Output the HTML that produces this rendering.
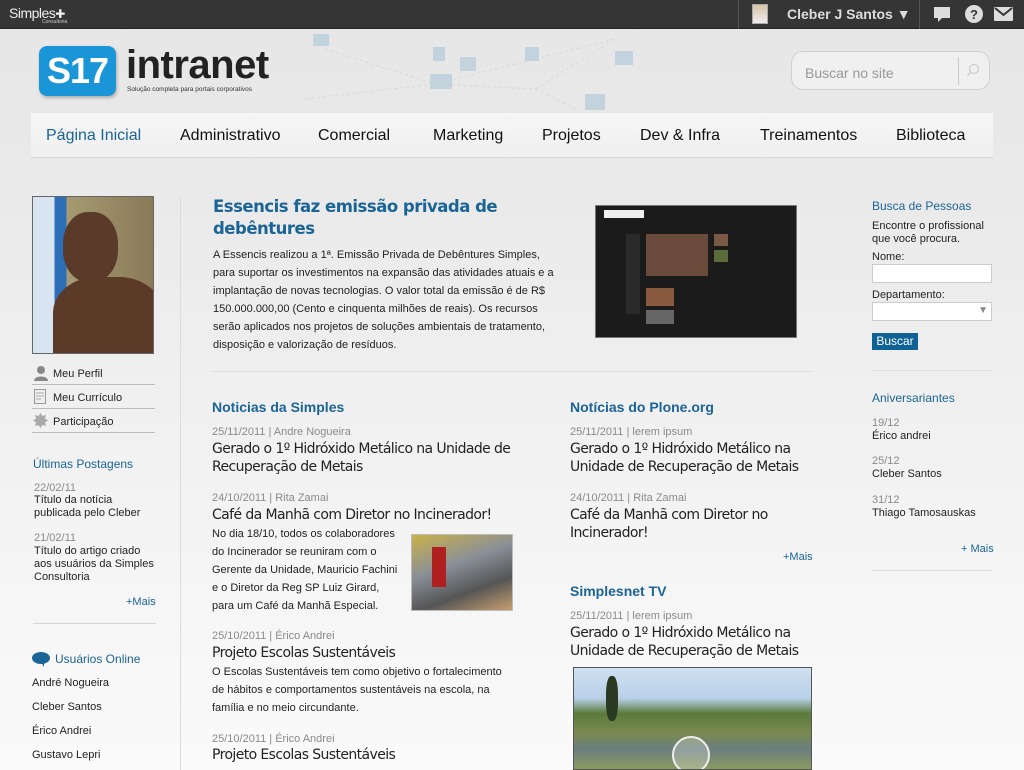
<!DOCTYPE html>
<html><head><meta charset="utf-8">
<style>
*{margin:0;padding:0;box-sizing:border-box}
body{width:1024px;height:770px;overflow:hidden;position:relative;font-family:"Liberation Sans",Arial,sans-serif;background:linear-gradient(#e6e6e6 0,#e9e9e9 160px,#ededed 300px,#f6f6f6 600px,#fafafa 770px)}
.a{position:absolute;white-space:nowrap}
.top{left:0;top:0;width:1024px;height:29px;background:#353535;border-bottom:1px solid #222}
.nav{left:31px;top:113px;width:962px;height:45px;background:linear-gradient(#f6f6f6,#efefef);border-bottom:1px solid #d6d6d6}
.ni{font-size:16px;color:#111;top:126px;line-height:20px}
.blue{color:#1b6496}
.meta{font-size:11px;color:#8a8a8a;line-height:14px}
.hl{font-size:14px;color:#222;line-height:18px;font-family:"DejaVu Sans",sans-serif;letter-spacing:-0.6px}
.tx{font-size:11px;color:#222;line-height:18px}
.sm{font-size:11px;color:#222;line-height:13px}
.sec{font-size:14px;font-weight:bold;color:#1b6496;line-height:18px}
.hr{height:1px;background:#d4d4d4}
</style></head><body>
<div class="a top"></div>
<div class="a" style="left:9px;top:5px;color:#eee;font-size:14px;letter-spacing:-0.5px">Simples<span style="font-size:12px">✚</span></div>
<div class="a" style="left:42px;top:19px;color:#ccc;font-size:5px">Consultoria</div>
<div class="a" style="left:738px;top:0;width:1px;height:29px;background:#555"></div>
<div class="a" style="left:752px;top:4px;width:16px;height:20px;background:linear-gradient(#d9c2a8,#eee);border:1px solid #aaa"></div>
<div class="a" style="left:787px;top:6px;color:#ddd;font-size:14px;font-weight:bold">Cleber J Santos ▼</div>
<div class="a" style="left:919px;top:0;width:1px;height:29px;background:#555"></div>
<svg class="a" style="left:933px;top:6px" width="18" height="17" viewBox="0 0 18 17"><path d="M1 1h16v11H9l-4 4v-4H1z" fill="#ddd"/></svg>
<svg class="a" style="left:965px;top:5px" width="18" height="18" viewBox="0 0 18 18"><circle cx="9" cy="9" r="9" fill="#ddd"/><text x="9" y="14" font-size="13" font-weight="bold" text-anchor="middle" fill="#353535" font-family="Liberation Sans">?</text></svg>
<svg class="a" style="left:994px;top:7px" width="19" height="14" viewBox="0 0 19 14"><rect width="19" height="14" rx="1" fill="#ddd"/><path d="M1 1l8.5 7L18 1" stroke="#353535" stroke-width="2" fill="none"/></svg>

<svg class="a" style="left:295px;top:29px" width="420" height="84" viewBox="0 0 420 84"><g stroke="#d8d8d8" stroke-width="1" fill="none" stroke-dasharray="3 3"><path d="M30 20L140 55L240 60L320 10"/><path d="M10 70L140 55L200 40"/><path d="M240 60L280 80"/><path d="M200 40L320 10"/></g><g fill="#c3d3dd"><rect x="18" y="5" width="16" height="12"/><rect x="135" y="45" width="22" height="15"/><rect x="138" y="18" width="12" height="14"/><rect x="165" y="28" width="16" height="14"/><rect x="230" y="18" width="14" height="14"/><rect x="320" y="22" width="18" height="14"/><rect x="290" y="65" width="20" height="16"/></g></svg>
<div class="a" style="left:39px;top:46px;width:77px;height:50px;background:#1a96d8;border-radius:8px;color:#fff;font-weight:bold;font-size:36px;line-height:50px;text-align:center;letter-spacing:-1px;box-shadow:1px 2px 3px rgba(0,0,0,.25)">S17</div>
<div class="a" style="left:126px;top:42px;font-size:40px;font-weight:bold;color:#222;line-height:46px;letter-spacing:-0.5px">intranet</div>
<div class="a" style="left:127px;top:86px;font-size:6.5px;color:#333">Solução completa para portais corporativos</div>
<div class="a" style="left:791px;top:51px;width:199px;height:39px;border:1px solid #d0d0d0;border-radius:12px;background:#f0f0f0"></div>
<div class="a" style="left:805px;top:65px;font-size:14px;color:#999">Buscar no site</div>
<div class="a" style="left:958px;top:57px;width:1px;height:28px;background:#ccc"></div>
<svg class="a" style="left:966px;top:63px" width="14" height="14" viewBox="0 0 14 14"><circle cx="8" cy="6" r="4.5" stroke="#ccc" stroke-width="1.3" fill="none"/><path d="M5 9L1.5 12.5" stroke="#ccc" stroke-width="1.5"/></svg>

<div class="a nav"></div>
<div class="a ni blue" style="left:46px">Página Inicial</div>
<div class="a ni" style="left:180px">Administrativo</div>
<div class="a ni" style="left:318px">Comercial</div>
<div class="a ni" style="left:433px">Marketing</div>
<div class="a ni" style="left:542px">Projetos</div>
<div class="a ni" style="left:640px">Dev &amp; Infra</div>
<div class="a ni" style="left:760px">Treinamentos</div>
<div class="a ni" style="left:896px">Biblioteca</div>

<div class="a" style="left:32px;top:196px;width:122px;height:158px;border:1px solid #666;background:linear-gradient(90deg,#d8e4ef 0,#d8e4ef 18%,#2c6fb8 18%,#2c6fb8 28%,#a59a72 28%,#8a7a58 100%);overflow:hidden"><div style="position:absolute;left:30px;top:15px;width:55px;height:70px;border-radius:45%;background:#5a3a28"></div><div style="position:absolute;left:20px;top:80px;width:110px;height:90px;border-radius:40% 40% 0 0;background:#5b3a27"></div></div>
<svg class="a" style="left:34px;top:365px" width="14" height="16" viewBox="0 0 14 16"><circle cx="7" cy="5" r="4" fill="#888"/><path d="M0 16c0-6 14-6 14 0z" fill="#888"/></svg>
<div class="a sm" style="left:53px;top:368px">Meu Perfil</div>
<div class="a hr" style="left:32px;top:384px;width:123px;background:#bbb"></div>
<svg class="a" style="left:34px;top:389px" width="12" height="15" viewBox="0 0 12 15"><rect x=".5" y=".5" width="11" height="14" fill="#eee" stroke="#999"/><path d="M2 4h8M2 7h8M2 10h5" stroke="#aaa"/></svg>
<div class="a sm" style="left:53px;top:392px">Meu Currículo</div>
<div class="a hr" style="left:32px;top:408px;width:123px;background:#bbb"></div>
<svg class="a" style="left:33px;top:413px" width="15" height="15" viewBox="0 0 15 15"><path d="M7.5 0l2 3 3.5-1-1 3.5 3 2-3 2 1 3.5-3.5-1-2 3-2-3-3.5 1 1-3.5-3-2 3-2-1-3.5 3.5 1z" fill="#aaa"/></svg>
<div class="a sm" style="left:53px;top:416px">Participação</div>
<div class="a hr" style="left:32px;top:432px;width:123px;background:#bbb"></div>
<div class="a blue" style="left:33px;top:457px;font-size:12px">Últimas Postagens</div>
<div class="a meta" style="left:34px;top:481px">22/02/11</div>
<div class="a sm" style="left:34px;top:494px">Título da notícia<br>publicada pelo Cleber</div>
<div class="a meta" style="left:34px;top:531px">21/02/11</div>
<div class="a sm" style="left:34px;top:545px">Título do artigo criado<br>aos usuários da Simples<br>Consultoria</div>
<div class="a blue" style="left:126px;top:596px;font-size:11px">+Mais</div>
<div class="a hr" style="left:33px;top:623px;width:123px"></div>
<svg class="a" style="left:32px;top:652px" width="18" height="15" viewBox="0 0 18 15"><ellipse cx="9" cy="6" rx="9" ry="6" fill="#1b6496"/><path d="M9 10l3 5 0-5z" fill="#1b6496"/></svg>
<div class="a blue" style="left:55px;top:652px;font-size:12px">Usuários Online</div>
<div class="a sm" style="left:32px;top:677px">André Nogueira</div>
<div class="a sm" style="left:32px;top:701px">Cleber Santos</div>
<div class="a sm" style="left:32px;top:725px">Érico Andrei</div>
<div class="a sm" style="left:32px;top:749px">Gustavo Lepri</div>
<div class="a" style="left:180px;top:196px;width:1px;height:574px;background:#dcdcdc"></div>

<div class="a" style="left:213px;top:196px;font-size:16.5px;font-weight:bold;color:#1b6496;line-height:22px;font-family:'DejaVu Sans',sans-serif;letter-spacing:-0.5px">Essencis faz emissão privada de<br>debêntures</div>
<div class="a tx" style="left:213px;top:246px">A Essencis realizou a 1ª. Emissão Privada de Debêntures Simples,<br>para suportar os investimentos na expansão das atividades atuais e a<br>implantação de novas tecnologias. O valor total da emissão é de R$<br>150.000.000,00 (Cento e cinquenta milhões de reais). Os recursos<br>serão aplicados nos projetos de soluções ambientais de tratamento,<br>disposição e valorização de resíduos.</div>
<div class="a" style="left:595px;top:205px;width:202px;height:133px;background:#1b1b1b;border:1px solid #777"><div style="position:absolute;left:8px;top:4px;width:40px;height:8px;background:#eee"></div><div style="position:absolute;left:50px;top:28px;width:62px;height:42px;background:#6a4a3a"></div><div style="position:absolute;left:118px;top:28px;width:14px;height:12px;background:#7a5a44"></div><div style="position:absolute;left:118px;top:44px;width:14px;height:12px;background:#5a6a3a"></div><div style="position:absolute;left:50px;top:82px;width:28px;height:18px;background:#8a5a40"></div><div style="position:absolute;left:50px;top:104px;width:28px;height:14px;background:#666"></div><div style="position:absolute;left:30px;top:28px;width:14px;height:80px;background:#2a2a2a"></div></div>
<div class="a hr" style="left:212px;top:371px;width:600px;background:#ddd"></div>

<div class="a sec" style="left:212px;top:398px">Noticias da Simples</div>
<div class="a meta" style="left:212px;top:425px">25/11/2011 | Andre Nogueira</div>
<div class="a hl" style="left:212px;top:440px">Gerado o 1º Hidróxido Metálico na Unidade de<br>Recuperação de Metais</div>
<div class="a meta" style="left:212px;top:491px">24/10/2011 | Rita Zamai</div>
<div class="a hl" style="left:212px;top:506px">Café da Manhã com Diretor no Incinerador!</div>
<div class="a tx" style="left:212px;top:525px">No dia 18/10, todos os colaboradores<br>do Incinerador se reuniram com o<br>Gerente da Unidade, Mauricio Fachini<br>e o Diretor da Reg SP Luiz Girard,<br>para um Café da Manhã Especial.</div>
<div class="a" style="left:411px;top:534px;width:102px;height:77px;border:1px solid #bbb;background:linear-gradient(160deg,#c9b24a 0,#8a8f98 40%,#555 70%,#c8a070 100%)"><div style="position:absolute;left:20px;top:12px;width:14px;height:40px;background:#b02020"></div></div>
<div class="a meta" style="left:212px;top:629px">25/10/2011 | Érico Andrei</div>
<div class="a hl" style="left:212px;top:644px">Projeto Escolas Sustentáveis</div>
<div class="a tx" style="left:212px;top:663px">O Escolas Sustentáveis tem como objetivo o fortalecimento<br>de hábitos e comportamentos sustentáveis na escola, na<br>família e no meio circundante.</div>
<div class="a meta" style="left:212px;top:732px">25/10/2011 | Érico Andrei</div>
<div class="a hl" style="left:212px;top:746px">Projeto Escolas Sustentáveis</div>

<div class="a sec" style="left:570px;top:398px">Notícias do Plone.org</div>
<div class="a meta" style="left:570px;top:425px">25/11/2011 | lerem ipsum</div>
<div class="a hl" style="left:570px;top:440px">Gerado o 1º Hidróxido Metálico na<br>Unidade de Recuperação de Metais</div>
<div class="a meta" style="left:570px;top:491px">24/10/2011 | Rita Zamai</div>
<div class="a hl" style="left:570px;top:506px">Café da Manhã com Diretor no<br>Incinerador!</div>
<div class="a blue" style="left:783px;top:551px;font-size:11px">+Mais</div>
<div class="a sec" style="left:570px;top:582px">Simplesnet TV</div>
<div class="a meta" style="left:570px;top:609px">25/11/2011 | lerem ipsum</div>
<div class="a hl" style="left:570px;top:624px">Gerado o 1º Hidróxido Metálico na<br>Unidade de Recuperação de Metais</div>
<div class="a" style="left:573px;top:667px;width:239px;height:103px;border:1px solid #555;background:linear-gradient(#cfe0f0 0,#b8d0e8 30%,#5a7a3a 45%,#7a8a50 65%,#6a7e80 80%,#8a9a60 100%);overflow:hidden"><div style="position:absolute;left:32px;top:8px;width:12px;height:45px;background:#2a3a22;border-radius:40%"></div><div style="position:absolute;left:98px;top:68px;width:38px;height:38px;border-radius:50%;border:2px solid #eee;background:rgba(255,255,255,.25)"></div></div>

<div class="a blue" style="left:872px;top:199px;font-size:12px">Busca de Pessoas</div>
<div class="a sm" style="left:872px;top:220px">Encontre o profissional<br>que você procura.</div>
<div class="a sm" style="left:872px;top:251px">Nome:</div>
<div class="a" style="left:872px;top:264px;width:120px;height:19px;background:#fff;border:1px solid #ccc"></div>
<div class="a sm" style="left:872px;top:289px">Departamento:</div>
<div class="a" style="left:872px;top:302px;width:120px;height:19px;background:#fff;border:1px solid #ccc"><span style="position:absolute;right:3px;top:2px;font-size:10px;color:#888">▼</span></div>
<div class="a" style="left:872px;top:333px;width:46px;height:17px;background:#0e6296;color:#fff;font-size:12px;line-height:17px;text-align:center">Buscar</div>
<div class="a hr" style="left:872px;top:370px;width:120px;background:#ddd"></div>
<div class="a blue" style="left:872px;top:391px;font-size:12px">Aniversariantes</div>
<div class="a meta" style="left:872px;top:416px">19/12</div>
<div class="a sm" style="left:872px;top:430px">Érico andrei</div>
<div class="a meta" style="left:872px;top:454px">25/12</div>
<div class="a sm" style="left:872px;top:468px">Cleber Santos</div>
<div class="a meta" style="left:872px;top:493px">31/12</div>
<div class="a sm" style="left:872px;top:507px">Thiago Tamosauskas</div>
<div class="a blue" style="left:961px;top:543px;font-size:11px">+ Mais</div>
<div class="a hr" style="left:872px;top:570px;width:120px;background:#ddd"></div>
</body></html>
